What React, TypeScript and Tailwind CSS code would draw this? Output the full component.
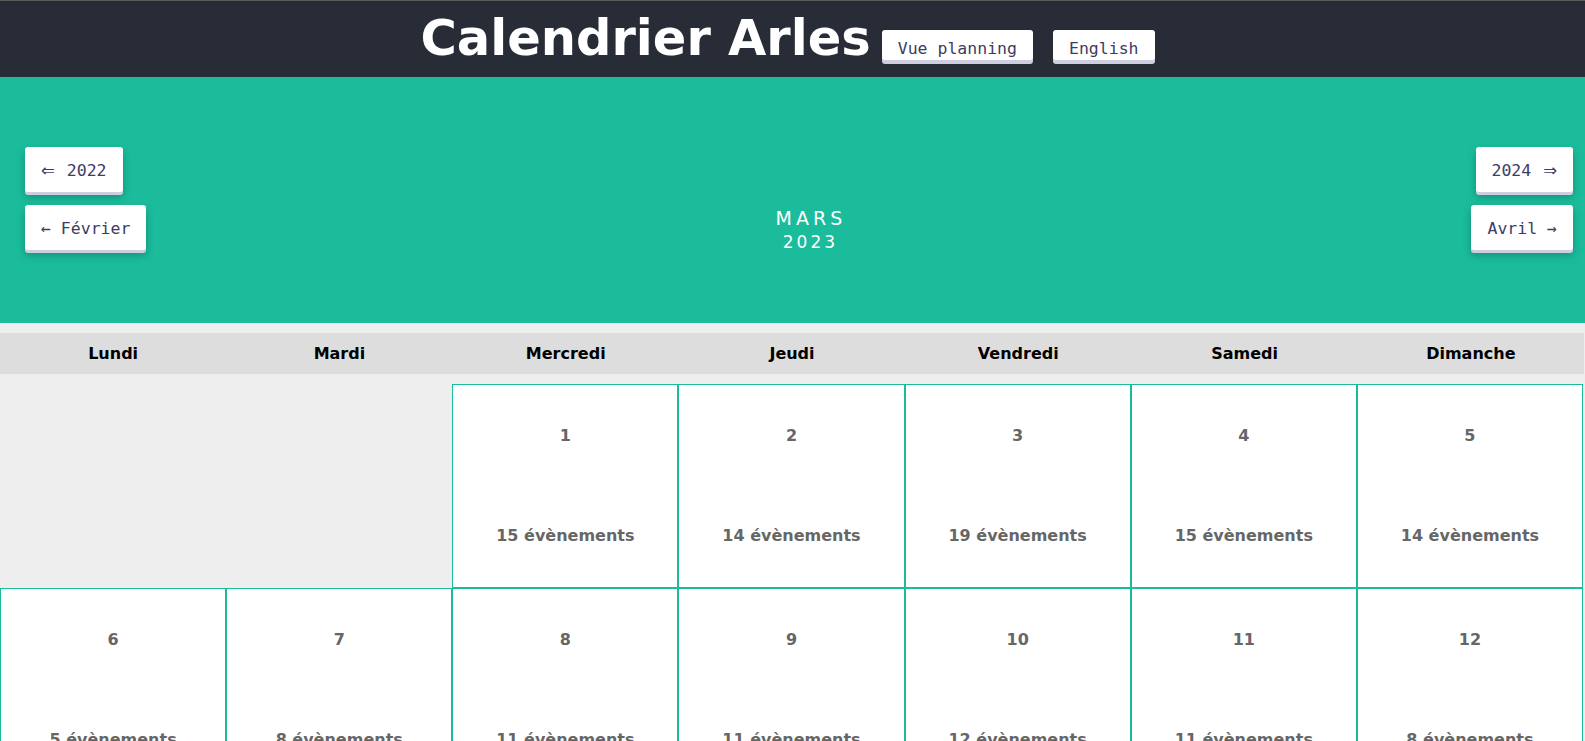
import React from "react";

const mono = "font-['DejaVu_Sans_Mono',monospace]";

function HeadBtn({ children, className = "" }: { children: React.ReactNode; className?: string }) {
  return (
    <button
      className={`${mono} bg-white text-[#3c3c64] text-[16.5px] leading-[16px] px-4 pt-[11px] pb-[3px] rounded-[3px] shadow-[0_4px_0_#cfcde0] ${className}`}
    >
      {children}
    </button>
  );
}

function NavBtn({ children }: { children: React.ReactNode }) {
  return (
    <button
      className={`${mono} bg-white text-[#3c3c64] text-[16.5px] leading-[20px] px-4 pt-[14px] pb-[11px] rounded-[3px] shadow-[0_3px_0_#cfcde0,0_5px_8px_rgba(0,0,0,0.25)] whitespace-nowrap`}
    >
      {children}
    </button>
  );
}

const days = ["Lundi", "Mardi", "Mercredi", "Jeudi", "Vendredi", "Samedi", "Dimanche"];

const cells: ({ d: number; n: number } | null)[] = [
  null,
  null,
  { d: 1, n: 15 },
  { d: 2, n: 14 },
  { d: 3, n: 19 },
  { d: 4, n: 15 },
  { d: 5, n: 14 },
  { d: 6, n: 5 },
  { d: 7, n: 8 },
  { d: 8, n: 11 },
  { d: 9, n: 11 },
  { d: 10, n: 12 },
  { d: 11, n: 11 },
  { d: 12, n: 8 },
];

export default function App() {
  return (
    <div className="min-h-screen bg-[#eeeeee] font-['DejaVu_Sans',Verdana,sans-serif] overflow-hidden">
      <header className="h-[77px] bg-[#282c37] border-t border-[#5a5a5a] flex justify-center items-start">
        <h1 className="text-white font-bold text-[49.5px] leading-[50px] mt-[12px] whitespace-nowrap">
          Calendrier Arles
        </h1>
        <HeadBtn className="ml-[11px] mt-[29px]">Vue planning</HeadBtn>
        <HeadBtn className="ml-[20px] mr-[10px] mt-[29px]">English</HeadBtn>
      </header>

      <section className="h-[246px] bg-[#1abc9c] flex items-start">
        <div className="pl-[25px] pt-[70px] flex flex-col items-start gap-[13px]">
          <NavBtn>
            <span className="font-['DejaVu_Sans',sans-serif] mr-[2px]">⇐</span> 2022
          </NavBtn>
          <NavBtn>← Février</NavBtn>
        </div>
        <div className="flex-1 flex flex-col items-center pt-[130px] text-white">
          <div className="text-[19px] leading-[22px] tracking-[4px] pl-[4px]">MARS</div>
          <div className="text-[17px] leading-[22px] tracking-[3px] pl-[3px] mt-[2px]">2023</div>
        </div>
        <div className="pr-[12px] pt-[70px] flex flex-col items-end gap-[13px]">
          <NavBtn>
            2024 <span className="font-['DejaVu_Sans',sans-serif] ml-[2px]">⇒</span>
          </NavBtn>
          <NavBtn>Avril →</NavBtn>
        </div>
      </section>

      <div className="w-[1584px] mt-[10px] h-[41px] bg-[#dddddd] grid grid-cols-7">
        {days.map((d) => (
          <div key={d} className="flex items-center justify-center text-black font-bold text-[16px]">
            {d}
          </div>
        ))}
      </div>

      <div className="w-[1583px] mt-[10px] grid grid-cols-7 auto-rows-[204px]">
        {cells.map((c, i) =>
          c ? (
            <div
              key={i}
              className="bg-white border border-[#1abc9c] flex flex-col items-center pt-[41px] text-[#666666] font-bold text-[16px] leading-[19px]"
            >
              <div>{c.d}</div>
              <div className="mt-[81px]">{c.n} évènements</div>
            </div>
          ) : (
            <div key={i} />
          )
        )}
      </div>
    </div>
  );
}
